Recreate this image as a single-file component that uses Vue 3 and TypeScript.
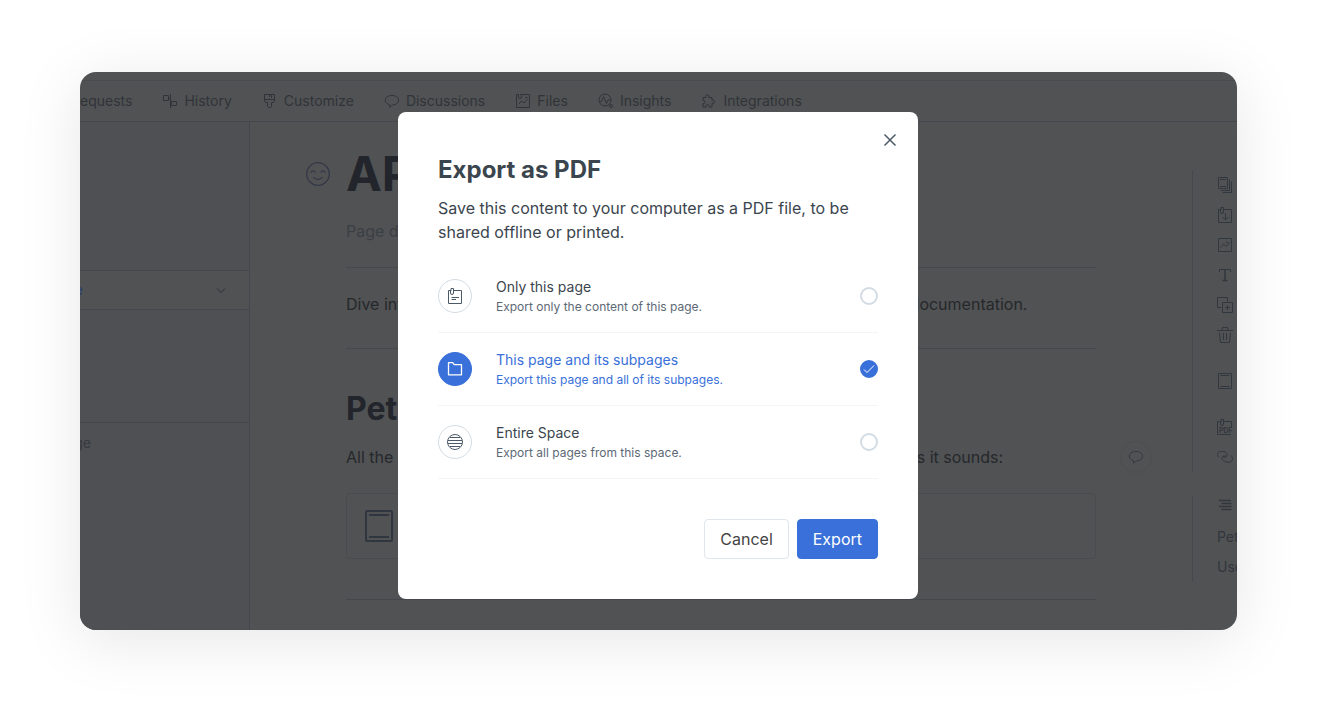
<script setup lang="ts">
import { ref } from 'vue'

interface Option {
  id: string
  title: string
  text: string
}

const options: Option[] = [
  { id: 'page', title: 'Only this page', text: 'Export only the content of this page.' },
  { id: 'subpages', title: 'This page and its subpages', text: 'Export this page and all of its subpages.' },
  { id: 'space', title: 'Entire Space', text: 'Export all pages from this space.' },
]
const selected = ref<string>('subpages')
</script>

<template>
  <div class="page">
    <div class="window">
      <div class="strip"></div>
      <nav class="tabs">
        <a href="#" class="tab">equests</a>
        <a href="#" class="tab">
          <svg class="icon" viewBox="0 0 16 16"><path d="M1.500 2.500h5v5h-5zM8.500 1v14M6.500 5.500h2M8.500 10.500h1M9.500 8.500h5v4h-5z" /></svg>
          <span>History</span>
        </a>
        <a href="#" class="tab">
          <svg class="icon" viewBox="0 0 16 16"><path d="M2.500 1.500h10v6.500l-1 1.500h-2v4l-1 1h-2l-1-1v-4h-2l-1-1.500zM2.500 6.500h10M7.500 1.500v2.500M9.500 1.500v3.500" /></svg>
          <span>Customize</span>
        </a>
        <a href="#" class="tab">
          <svg class="icon" viewBox="0 0 16 16"><path d="M5.500 11.600C2.800 11 1.300 9.300 1.300 7.200c0-2.800 2.700-4.700 6.600-4.700s6.700 1.900 6.700 4.700-2.700 4.700-6 4.700L5.700 14.200z" /></svg>
          <span>Discussions</span>
        </a>
        <a href="#" class="tab">
          <svg class="icon" viewBox="0 0 16 16"><path d="M7 1.500h7.500v13h-13v-13H3M3.500 1v3a1.500 1.500 0 0 0 3 0V1.500H5M4 11l2.500-3 2.500 2 3.500-4M10 4.500h2.500" /></svg>
          <span>Files</span>
        </a>
        <a href="#" class="tab">
          <svg class="icon" viewBox="0 0 16 16"><circle cx="7" cy="7" r="6" /><path d="M1.500 8.500h2l2-5 3 7 1.500-3.500h2.500" /><circle cx="13" cy="13" r="1.500" /></svg>
          <span>Insights</span>
        </a>
        <a href="#" class="tab">
          <svg class="icon" viewBox="0 0 16 16"><path d="M2 4.500h3C4.300 2.800 5 1.700 6.300 1.700S8.300 2.800 7.700 4.500H11v3c1.700-.7 2.800 0 2.800 1.200S12.700 10.600 11 10v4H8c.4-1.500-.3-2.300-1.500-2.300S4.600 12.500 5 14H2v-3.500c1.300.3 2-.5 2-1.700S3.300 7.200 2 7.500z" /></svg>
          <span>Integrations</span>
        </a>
      </nav>

      <div class="body">
        <aside class="sidebar">
          <button type="button" class="side-item">
            <span>e</span>
            <svg class="icon" viewBox="0 0 16 16"><path d="M4 6.500l4 4 4-4" /></svg>
          </button>
          <div class="side-foot"><span>ge</span></div>
        </aside>

        <main class="content">
          <div class="title-row">
            <svg class="smile" viewBox="0 0 24 24"><circle cx="12" cy="12" r="11.300" /><path d="M5 10.800a2 2 0 0 1 4 0M15 10.800a2 2 0 0 1 4 0M7.500 15c2 3.300 7 3.300 9 0" /></svg>
            <h1>API Reference</h1>
          </div>
          <p class="description">Page description (optional)</p>
          <hr />
          <p>Dive into the specifics of each API endpoint by checking out our complete documentation.</p>
          <hr />
          <h2>Pets</h2>
          <div class="commented">
            <p>All the methods associated with CRUDing some pets. Which isn't as weird as it sounds:</p>
            <button type="button" class="comment" aria-label="Comment">
              <svg class="icon" viewBox="0 0 16 16"><path d="M5.500 11.600C2.800 11 1.300 9.300 1.300 7.200c0-2.800 2.700-4.700 6.600-4.700s6.700 1.900 6.700 4.700-2.700 4.700-6 4.700L5.700 14.200z" /></svg>
            </button>
          </div>
          <div class="card">
            <svg class="block" viewBox="0 0 28 32"><rect x="1" y="1" width="26" height="30" rx="1" /><path d="M4 5h20M4 27h20" /></svg>
          </div>
          <hr class="last" />
        </main>

        <aside class="rail">
          <div class="tools">
            <svg class="icon" viewBox="0 0 16 16"><path d="M1.500.500h9v11h-9zM3 2.500h6M3 9.500h6M12.500 2.500v11H3.500M14.500 4.500v11H5.500" /></svg>
            <svg class="icon" viewBox="0 0 16 16"><path d="M7 2.500h7.500v13h-13v-13H3M3.500 2v3a1.500 1.500 0 0 0 3 0V.500H4V3M8.500 6v6.500M5.500 10l3 3 3-3" /></svg>
            <svg class="icon" viewBox="0 0 16 16"><path d="M1.500 1.500h13v13h-13zM3.500 10.500l3-3.500 3 2.500 3.500-4" /><circle cx="10" cy="5.500" r="0.600" /></svg>
            <svg class="icon" viewBox="0 0 16 16"><path d="M2.500 5V2.500h11V5" /><path d="M8 2.500v11M5.500 13.500h5" stroke-width="1.500" /></svg>
            <svg class="icon" viewBox="0 0 16 16"><path d="M4 10.500H.500v-10h10v4M5.500 5.500h10v10h-10zM10.500 8v5M8 10.500h5" /></svg>
            <svg class="icon" viewBox="0 0 16 16"><path d="M0 3.500h16M5 3.500l.500-3h5l.500 3M2.500 5.500l1 10h9l1-10M6.500 6v7M9.500 6v7" /></svg>
            <svg class="icon spaced" viewBox="0 0 16 16"><path d="M1.500.500h13v15h-13zM3.500 2.500h9M3.500 13.500h9" /></svg>
            <svg class="icon spaced pdf" viewBox="0 0 16 16">
              <path d="M7 2.500h7.500V8M2.500 2.500H.500v13H14M3.500 2v3a1.500 1.500 0 0 0 3 0V.500H4V3" />
              <text x="2" y="14">PDF</text>
            </svg>
            <svg class="icon" viewBox="0 0 16 16"><path d="M2 8.500C-.5 6 .5 2.500 3.500 2.500h2c4 0 5.500 3 4 5-1 1.200-3 1-3.500-.5M14 6.500c2.500 2.500 1.500 6.500-1.500 6.500h-2c-4 0-6.500-3-5-5 1-1.500 3.500-1.500 4 0" /></svg>
          </div>
          <div class="outline">
            <svg class="icon" viewBox="0 0 16 16"><path d="M2 3.500h12M4.500 6.500h10M2 9.500h12.500M4.500 12.500h10" stroke-width="1.500" /></svg>
            <a href="#">Pets</a>
            <a href="#">Users</a>
          </div>
        </aside>
      </div>

      <div class="overlay">
        <form class="modal" role="dialog" aria-labelledby="export-title" @submit.prevent>
          <button type="button" class="close" aria-label="Close">
            <svg viewBox="0 0 24 24"><path d="M6.500 6.500l11 11M17.500 6.500l-11 11" /></svg>
          </button>
          <h3 id="export-title">Export as PDF</h3>
          <p class="lead">Save this content to your computer as a PDF file, to be shared offline or printed.</p>
          <div class="options">
            <label v-for="o in options" :key="o.id" class="option" :class="{ active: selected === o.id }">
              <span class="badge">
                <svg v-if="o.id === 'page'" class="icon" viewBox="0 0 16 16"><path d="M7 2.500h7.500v13h-13v-13H3M3.500 2v3a1.500 1.500 0 0 0 3 0V.500H4V3M4.500 9.500H12M4.500 11.500H9" /></svg>
                <svg v-else-if="o.id === 'subpages'" class="icon folder" viewBox="0 0 16 16"><path d="M1.500 1.700h4.200l1.600 2h7.200v10.100h-13z" /></svg>
                <svg v-else class="icon" viewBox="0 0 16 16"><circle cx="8" cy="8" r="7.500" /><path d="M3 3.500h10M1 6.500h14M1 9.500h14M3 12.500h10" /></svg>
              </span>
              <span class="words">
                <span class="name">{{ o.title }}</span>
                <span class="text">{{ o.text }}</span>
              </span>
              <span class="choice">
                <input v-model="selected" type="radio" name="scope" :value="o.id" />
                <svg v-if="selected === o.id" viewBox="0 0 18 18"><path d="M4 9.500l3 3 7-7" /></svg>
              </span>
            </label>
          </div>
          <div class="actions">
            <button type="button" class="btn">Cancel</button>
            <button type="submit" class="btn primary">Export</button>
          </div>
        </form>
      </div>
    </div>
  </div>
</template>

<style>
body {
  margin: 0;
  background: #fff;
}
</style>

<style scoped>
* {
  box-sizing: border-box;
}
.page {
  padding: 72px 80px 80px;
  font-family: Inter, "Liberation Sans", sans-serif;
  font-size: 16px;
  line-height: 24px;
  overflow: hidden;
}
.window {
  position: relative;
  overflow: hidden;
  border-radius: 16px;
  background: #515253;
  box-shadow: 0 10px 64px rgba(0, 0, 0, 0.1);
}
h1, h2, h3, p {
  margin: 0;
}
a {
  color: inherit;
  text-decoration: none;
}
button {
  font: inherit;
  color: inherit;
  cursor: pointer;
}
svg {
  flex: none;
  display: block;
  fill: none;
  stroke: currentColor;
  overflow: visible;
}
.icon {
  width: 16px;
  height: 16px;
}
.strip {
  height: 9px;
  border-bottom: 1px solid #484b50;
}
.tabs {
  display: flex;
  gap: 30px;
  height: 41px;
  border-bottom: 1px solid #44474d;
  color: #30343a;
  font-size: 14px;
}
.tab {
  display: flex;
  align-items: center;
  gap: 6px;
}
.body {
  display: flex;
}
.sidebar {
  flex: none;
  width: 170px;
  padding-top: 148px;
  background: #4e5054;
  border-right: 1px solid #44474d;
  font-size: 14px;
}
.side-item {
  display: flex;
  align-items: center;
  justify-content: space-between;
  width: 100%;
  height: 40px;
  padding: 0 20px 0 0;
  border: solid #44474d;
  border-width: 1px 0;
  background: #515253;
  color: #2b2e33;
}
.side-item span {
  display: flex;
  justify-content: flex-end;
  width: 3px;
  color: #25406f;
}
.side-foot {
  margin-top: 112px;
  padding-top: 8px;
  border-top: 1px solid #44474d;
  color: #35393f;
}
.side-foot span {
  display: flex;
  justify-content: flex-end;
  width: 11px;
}
.content {
  flex: 1;
  min-width: 0;
  padding: 24px 0 30px;
  margin-left: 96px;
  color: #25282c;
}
.title-row {
  display: flex;
  align-items: center;
  gap: 16px;
  margin-left: -40px;
}
.smile {
  width: 24px;
  height: 24px;
  stroke-width: 1.3px;
  color: #333946;
}
h1 {
  font-size: 48px;
  line-height: 56px;
  font-weight: 700;
  color: #22252b;
}
h2 {
  margin-top: 40px;
  font-size: 32px;
  line-height: 40px;
  font-weight: 700;
  color: #22252b;
}
.description {
  margin-top: 17px;
  color: #3a3f46;
}
hr {
  height: 1px;
  margin: 24px 0;
  border: 0;
  background: #44474b;
}
.content > hr + p + hr {
  margin: 32px 0 0;
}
.commented {
  position: relative;
  margin-top: 16px;
}
.comment {
  position: absolute;
  right: -56px;
  top: -4px;
  display: grid;
  place-items: center;
  width: 32px;
  height: 32px;
  padding: 0;
  border: 1px solid #4c4e50;
  border-radius: 50%;
  background: none;
  color: #34383d;
}
.card {
  display: flex;
  align-items: center;
  height: 66px;
  margin-top: 24px;
  padding: 0 18px;
  border: 1px solid #494b4e;
  border-radius: 4px;
}
.block {
  width: 28px;
  height: 32px;
  stroke-width: 2px;
  color: #303640;
}
.last {
  margin: 40px 0 0;
}
.rail {
  flex: none;
  width: 45px;
  margin: 48px 0 0 96px;
  color: #31373f;
  font-size: 14px;
}
.tools,
.outline {
  display: flex;
  flex-direction: column;
  padding-left: 24px;
  border-left: 1px solid #45484c;
}
.tools .icon {
  margin: 7px 0;
}
.tools .spaced {
  margin-top: 23px;
}
.outline {
  margin-top: 24px;
}
.outline .icon {
  height: 18px;
  margin-bottom: 8px;
}
.outline a {
  line-height: 30px;
}
.pdf text {
  fill: currentColor;
  stroke: none;
  font-size: 7px;
  font-weight: 700;
}
.overlay {
  position: absolute;
  inset: 0;
  display: flex;
  align-items: flex-start;
  justify-content: center;
  padding: 40px 1px 0 0;
}
.modal {
  position: relative;
  width: 520px;
  padding: 40px;
  border-radius: 8px;
  background: #fff;
  color: #3b454e;
}
.close {
  position: absolute;
  top: 16px;
  right: 16px;
  width: 24px;
  height: 24px;
  padding: 0;
  border: 0;
  background: none;
  color: #4c5a67;
}
.close svg {
  stroke-width: 1.5px;
}
h3 {
  font-size: 24px;
  line-height: 36px;
  font-weight: 700;
}
.lead {
  margin-top: 8px;
}
.options {
  margin-top: 16px;
}
.option {
  display: flex;
  align-items: center;
  height: 73px;
  border-bottom: 1px solid #f2f4f6;
  cursor: pointer;
}
.badge {
  display: grid;
  place-items: center;
  width: 34px;
  height: 34px;
  margin-right: 24px;
  border: 1px solid #d3dce4;
  border-radius: 50%;
  color: #4c5a67;
}
.words {
  flex: 1;
  display: flex;
  flex-direction: column;
  padding-top: 2px;
}
.name {
  font-size: 14px;
  line-height: 20px;
}
.text {
  font-size: 12px;
  line-height: 20px;
  color: #5c6975;
}
.choice {
  position: relative;
  width: 18px;
  height: 18px;
}
.choice input {
  appearance: none;
  display: block;
  width: 18px;
  height: 18px;
  margin: 0;
  border: 2px solid #d3dce4;
  border-radius: 50%;
}
.choice input:checked {
  border-color: #3970d9;
  background: #3970d9;
}
.choice svg {
  position: absolute;
  inset: 0;
  color: #fff;
  pointer-events: none;
}
.active,
.active .text {
  color: #3970d9;
}
.active .badge {
  border-color: #3970d9;
  background: #3970d9;
  color: #fff;
}
.folder {
  stroke-width: 1.3px;
  stroke-linejoin: round;
}
.actions {
  display: flex;
  justify-content: flex-end;
  gap: 8px;
  margin-top: 40px;
}
.btn {
  height: 40px;
  padding: 0 15px;
  border: 1px solid #e0e6eb;
  border-radius: 4px;
  background: #fff;
  color: #444;
}
.primary {
  border-color: #3970d9;
  background: #3970d9;
  color: #fff;
}
</style>
